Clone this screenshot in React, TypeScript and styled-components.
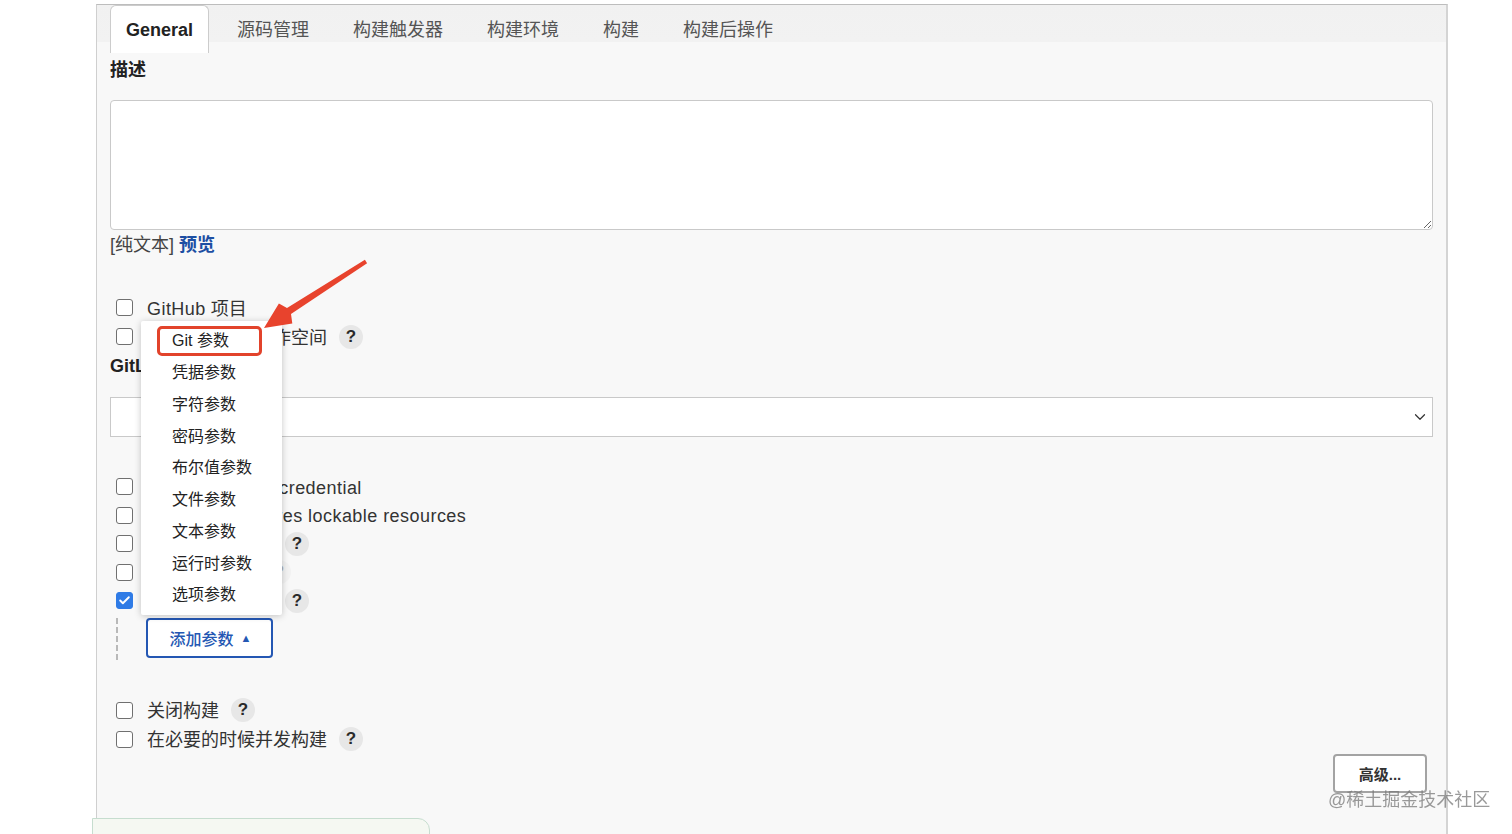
import React from 'react';
import styled, { createGlobalStyle } from 'styled-components';
import { ChevronDown, Check } from 'lucide-react';

const GlobalStyle = createGlobalStyle`
  body {
    margin: 0;
    background: #ffffff;
    font-family: "Liberation Sans", "Noto Sans CJK SC", sans-serif;
    color: #333;
    overflow: hidden;
  }
`;

const Page = styled.div`
  padding: 4px 0 0 96px;
  height: 830px;
`;

const Panel = styled.div`
  width: 1352px;
  box-sizing: border-box;
  border-top: 1px solid #bdbdbd;
  border-left: 1px solid #cfcfcf;
  border-right: 2px solid #d4d4d4;
  background: #f8f8f8;
  padding: 0 13px 40px 13px;
  height: 830px;
`;

const TabBar = styled.div`
  display: flex;
  gap: 12px;
  height: 48px;
  margin: 0 -13px;
  padding-left: 13px;
  background: linear-gradient(to bottom, #f1f1f1 0, #f2f2f2 37px, #f8f8f8 37px);
`;

const Tab = styled.div<{ active?: boolean }>`
  padding: 0 15px;
  line-height: 48px;
  font-size: 18px;
  color: ${({ active }) => (active ? '#222' : '#555')};
  font-weight: ${({ active }) => (active ? 700 : 400)};
  background: ${({ active }) => (active ? '#fff' : 'transparent')};
  border: 1px solid ${({ active }) => (active ? '#cccccc' : 'transparent')};
  border-bottom: none;
  border-radius: 6px 6px 0 0;
`;

const Label = styled.div`
  font-size: 18px;
  font-weight: 700;
  line-height: 24px;
  color: #222;
`;

const DescLabel = styled(Label)`
  margin-top: 5px;
`;

const TextArea = styled.textarea`
  display: block;
  width: 100%;
  height: 130px;
  box-sizing: border-box;
  margin-top: 18px;
  border: 1px solid #c9c9c9;
  border-radius: 4px;
  background: #fff;
  resize: vertical;
  font: inherit;
`;

const Hint = styled.div`
  margin-top: 4px;
  font-size: 18px;
  line-height: 22px;
  color: #444;
`;

const PreviewLink = styled.a`
  color: #1d4fa3;
  font-weight: 700;
  text-decoration: none;
`;

const CheckList = styled.div<{ top: number }>`
  margin-top: ${({ top }) => top}px;
  display: flex;
  flex-direction: column;
`;

const Row = styled.div<{ h?: number }>`
  display: flex;
  align-items: center;
  height: ${({ h }) => h ?? 29}px;
  padding-left: 6px;
  font-size: 18px;
  color: #333;
`;

const Text = styled.span<{ en?: boolean }>`
  line-height: 24px;
  padding-top: 2px;
  white-space: nowrap;
  letter-spacing: ${({ en }) => (en ? '0.45px' : '0')};
`;

const En = styled.span`
  letter-spacing: 0.45px;
`;

const Box = styled.span<{ checked?: boolean }>`
  width: 17px;
  height: 17px;
  box-sizing: border-box;
  border-radius: 3px;
  border: 1.5px solid ${({ checked }) => (checked ? '#2f7be6' : '#707070')};
  background: ${({ checked }) => (checked ? '#2f7be6' : '#fff')};
  margin-right: 14px;
  display: inline-flex;
  align-items: center;
  justify-content: center;
  flex-shrink: 0;
`;

const Help = styled.span<{ faded?: boolean }>`
  width: 24px;
  height: 24px;
  border-radius: 50%;
  background: #e7e7e7;
  margin-left: 12px;
  display: inline-flex;
  align-items: center;
  justify-content: center;
  font-size: 17px;
  font-weight: 700;
  color: #2a2a2a;
  opacity: ${({ faded }) => (faded ? 0.35 : 1)};
`;

const GitLabLabel = styled(Label)`
  margin-top: 2.5px;
`;

const Select = styled.div`
  margin-top: 19px;
  height: 40px;
  box-sizing: border-box;
  border: 1px solid #c9c9c9;
  background: #fff;
  display: flex;
  align-items: center;
  justify-content: flex-end;
  padding-right: 3px;
  color: #333;
`;

const ParamArea = styled.div`
  margin: 3px 0 0 6px;
  padding-left: 28px;
  border-left: 2px dashed #b9b9b9;
  height: 42px;
  position: relative;
`;

const AddButton = styled.button`
  height: 40px;
  width: 127px;
  box-sizing: border-box;
  border: 2px solid #2457b3;
  border-radius: 4px;
  background: #fff;
  color: #2457b3;
  font-family: inherit;
  font-size: 16px;
  font-weight: 500;
  display: flex;
  align-items: center;
  justify-content: center;
  gap: 7px;
  padding: 0 0 0 2px;
`;

const Caret = styled.span`
  font-size: 11px;
  line-height: 1;
`;

const Menu = styled.div`
  position: absolute;
  left: 23px;
  bottom: calc(100% + 3px);
  width: 141px;
  padding: 4px 0;
  background: #fff;
  border-radius: 2px;
  box-shadow: 0 1px 7px rgba(0, 0, 0, 0.22);
  z-index: 5;
`;

const MenuItem = styled.div`
  position: relative;
  height: 31.75px;
  line-height: 31.75px;
  padding-left: 31px;
  font-size: 16px;
  color: #222;
`;

const Highlight = styled.span`
  position: absolute;
  left: 16px;
  top: 1px;
  width: 105px;
  height: 30px;
  box-sizing: border-box;
  border: 3px solid #e2432b;
  border-radius: 5px;
`;

const BottomBar = styled.div`
  display: flex;
  justify-content: flex-end;
  padding-right: 6px;
`;

const AdvancedButton = styled.button`
  width: 94px;
  height: 39px;
  box-sizing: border-box;
  border: 2px solid #a3a3a3;
  border-radius: 4px;
  background: #fff;
  color: #333;
  font-family: inherit;
  font-size: 15px;
  font-weight: 700;
`;

const Arrow = styled.svg`
  position: absolute;
  left: 0;
  top: 0;
  pointer-events: none;
  z-index: 10;
`;

const Footer = styled.div`
  position: fixed;
  left: 92px;
  top: 818px;
  width: 338px;
  height: 40px;
  box-sizing: border-box;
  border: 1px solid #c6ddcf;
  border-radius: 0 12px 0 0;
  background: #f5f8f2;
`;

const Watermark = styled.div`
  position: fixed;
  left: 1328px;
  top: 788px;
  font-size: 18px;
  line-height: 24px;
  color: rgba(120, 120, 120, 0.75);
  white-space: nowrap;
`;

const tabs = ['General', '源码管理', '构建触发器', '构建环境', '构建', '构建后操作'];
const params = ['Git 参数', '凭据参数', '字符参数', '密码参数', '布尔值参数', '文件参数', '文本参数', '运行时参数', '选项参数'];

export default function App() {
  return (
    <>
      <GlobalStyle />
      <Page>
        <Panel>
          <TabBar>
            {tabs.map((t, i) => (
              <Tab key={t} active={i === 0}>
                {t}
              </Tab>
            ))}
          </TabBar>
          <DescLabel>描述</DescLabel>
          <TextArea />
          <Hint>
            [纯文本] <PreviewLink href="#">预览</PreviewLink>
          </Hint>

          <CheckList top={37}>
            <Row>
              <Box />
              <Text>
                <En>GitHub</En> 项目
              </Text>
            </Row>
            <Row>
              <Box />
              <Text>使用自定义的工作空间</Text>
              <Help>?</Help>
            </Row>
          </CheckList>

          <GitLabLabel>GitLab Connection</GitLabLabel>
          <Select>
            <ChevronDown size={18} strokeWidth={1.6} />
          </Select>

          <CheckList top={36}>
            <Row h={28.5}>
              <Box />
              <Text en>This build uses credential</Text>
            </Row>
            <Row h={28.5}>
              <Box />
              <Text en>This build requires lockable resources</Text>
            </Row>
            <Row h={28.5}>
              <Box />
              <Text>限制运行的节点</Text>
              <Help>?</Help>
            </Row>
            <Row h={28.5}>
              <Box />
              <Text>丢弃旧的构建</Text>
              <Help faded>?</Help>
            </Row>
            <Row h={28.5}>
              <Box checked>
                <Check size={13} color="#fff" strokeWidth={3.5} />
              </Box>
              <Text>参数化构建过程</Text>
              <Help>?</Help>
            </Row>
          </CheckList>

          <ParamArea>
            <Menu>
              {params.map((p, i) => (
                <MenuItem key={p}>
                  {i === 0 && <Highlight />}
                  {p}
                </MenuItem>
              ))}
            </Menu>
            <AddButton>
              添加参数 <Caret>▲</Caret>
            </AddButton>
          </ParamArea>

          <CheckList top={35.5}>
            <Row>
              <Box />
              <Text>关闭构建</Text>
              <Help>?</Help>
            </Row>
            <Row>
              <Box />
              <Text>在必要的时候并发构建</Text>
              <Help>?</Help>
            </Row>
          </CheckList>

          <BottomBar>
            <AdvancedButton>高级...</AdvancedButton>
          </BottomBar>
        </Panel>
      </Page>

      <Arrow width="400" height="400" viewBox="0 0 400 400">
        <polygon
          points="264,328 278.9,303.5 287,308 364.9,259.8 367.1,263.2 291,314 292.3,323.5"
          fill="#e8432d"
        />
      </Arrow>
      <Footer />
      <Watermark>@稀土掘金技术社区</Watermark>
    </>
  );
}
